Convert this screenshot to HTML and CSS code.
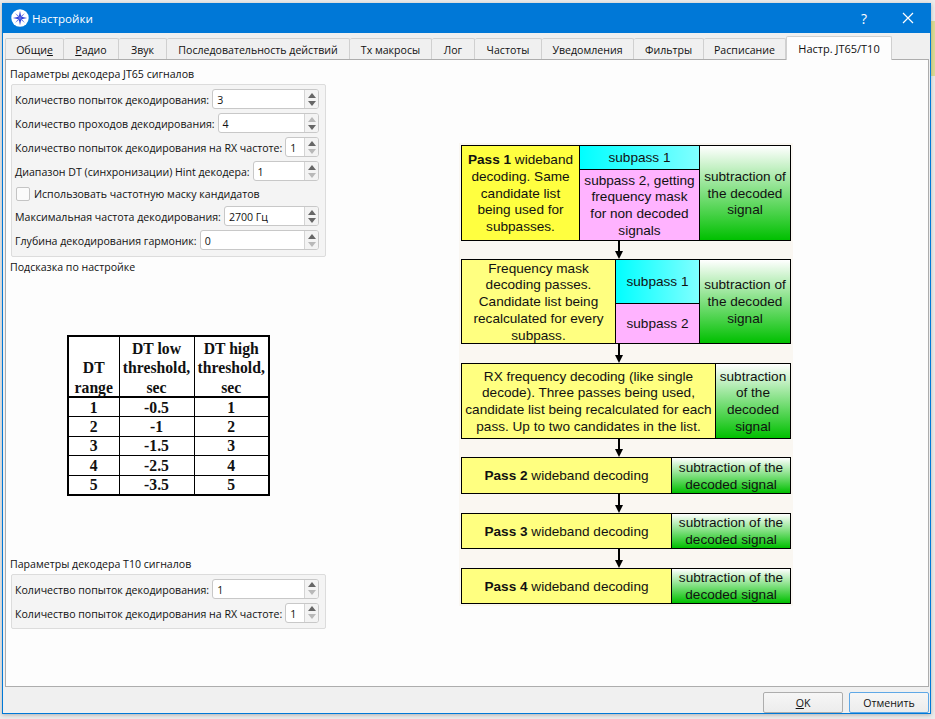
FILE: index.html
```html
<!DOCTYPE html>
<html lang="en">
  <head>
    <meta charset="UTF-8" />
    <meta name="viewport" content="width=device-width, initial-scale=1.0" />
    <title>Настройки</title>
    <link rel="stylesheet" href="styles.css">
  </head>
  <body>
    <div class="behind"></div>
    <div class="window">
      <div class="titlebar">
        <svg class="app-icon" viewBox="0 0 18 18" width="18" height="18">
          <circle cx="9" cy="9" r="8.7" fill="#fff" />
          <path d="M9 1.8 10.2 7.8 16.2 9 10.2 10.2 9 16.2 7.8 10.2 1.8 9 7.8 7.8Z" fill="#2a3bd6" />
          <path d="M4 4 8.6 7.6 9.4 7.6 14 4 10.4 8.6 10.4 9.4 14 14 9.4 10.4 8.6 10.4 4 14 7.6 9.4 7.6 8.6Z" fill="#5b6ae6" />
        </svg>
        <span class="title">Настройки</span>
        <span class="title-btn help">?</span>
        <span class="title-btn close">
          <svg viewBox="0 0 12 12" width="12" height="12"><path d="M1 1 11 11M11 1 1 11" stroke="#fff" stroke-width="1.2" fill="none" /></svg>
        </span>
      </div>

      <div class="tabs">
        <div class="tab">Общи<u>е</u></div>
        <div class="tab"><u>Р</u>адио</div>
        <div class="tab">Звук</div>
        <div class="tab">Последовательность действий</div>
        <div class="tab">Tx макросы</div>
        <div class="tab">Лог</div>
        <div class="tab">Частоты</div>
        <div class="tab">Уведомления</div>
        <div class="tab">Фильтры</div>
        <div class="tab">Расписание</div>
        <div class="tab active">Настр. JT65/T10</div>
      </div>

      <div class="pane">
        <div class="left">
          <div class="caption first">Параметры декодера JT65 сигналов</div>
          <div class="group main">
            <div class="row">
              <span class="label">Количество попыток декодирования:</span>
              <div class="spin"><span class="value">3</span><div class="arrows"><i class="up"></i><i class="down"></i></div></div>
            </div>
            <div class="row">
              <span class="label">Количество проходов декодирования:</span>
              <div class="spin"><span class="value">4</span><div class="arrows"><i class="up off"></i><i class="down"></i></div></div>
            </div>
            <div class="row">
              <span class="label">Количество попыток декодирования на RX частоте:</span>
              <div class="spin"><span class="value">1</span><div class="arrows"><i class="up"></i><i class="down off"></i></div></div>
            </div>
            <div class="row">
              <span class="label">Диапазон DT (синхронизации) Hint декодера:</span>
              <div class="spin"><span class="value">1</span><div class="arrows"><i class="up"></i><i class="down off"></i></div></div>
            </div>
            <div class="row check-row">
              <span class="checkbox"></span>
              <span class="label">Использовать частотную маску кандидатов</span>
            </div>
            <div class="row">
              <span class="label">Максимальная частота декодирования:</span>
              <div class="spin"><span class="value">2700 Гц</span><div class="arrows"><i class="up"></i><i class="down"></i></div></div>
            </div>
            <div class="row">
              <span class="label">Глубина декодирования гармоник:</span>
              <div class="spin"><span class="value">0</span><div class="arrows"><i class="up"></i><i class="down off"></i></div></div>
            </div>
          </div>

          <div class="caption hint">Подсказка по настройке</div>

          <table class="dt-table">
            <tr class="head">
              <th><div>DT<br>range</div></th>
              <th><div>DT low<br>threshold,<br>sec</div></th>
              <th><div>DT high<br>threshold,<br>sec</div></th>
            </tr>
            <tr><td>1</td><td>-0.5</td><td>1</td></tr>
            <tr><td>2</td><td>-1</td><td>2</td></tr>
            <tr><td>3</td><td>-1.5</td><td>3</td></tr>
            <tr><td>4</td><td>-2.5</td><td>4</td></tr>
            <tr><td>5</td><td>-3.5</td><td>5</td></tr>
          </table>

          <div class="caption t10">Параметры декодера T10 сигналов</div>
          <div class="group">
            <div class="row">
              <span class="label">Количество попыток декодирования:</span>
              <div class="spin"><span class="value">1</span><div class="arrows"><i class="up"></i><i class="down off"></i></div></div>
            </div>
            <div class="row">
              <span class="label">Количество попыток декодирования на RX частоте:</span>
              <div class="spin"><span class="value">1</span><div class="arrows"><i class="up"></i><i class="down off"></i></div></div>
            </div>
          </div>
        </div>

        <div class="flow">
          <div class="step step-1">
            <div class="cell yellow strong w-118"><span><b>Pass 1</b> wideband decoding. Same candidate list being used for subpasses.</span></div>
            <div class="split w-120">
              <div class="cell cyan h-24">subpass 1</div>
              <div class="cell pink grow">subpass 2, getting frequency mask for non decoded signals</div>
            </div>
            <div class="cell green grow">subtraction of the decoded signal</div>
          </div>
          <div class="arrow short"></div>
          <div class="step step-2">
            <div class="cell yellow w-154">Frequency mask decoding passes. Candidate list being recalculated for every subpass.</div>
            <div class="split w-84">
              <div class="cell cyan h-44">subpass 1</div>
              <div class="cell pink grow">subpass 2</div>
            </div>
            <div class="cell green grow">subtraction of the decoded signal</div>
          </div>
          <div class="arrow"></div>
          <div class="step step-3">
            <div class="cell yellow w-254"><span>RX frequency decoding (like single<br>decode). Three passes being used,<br>candidate list being recalculated for each<br>pass. Up to two candidates in the list.</span></div>
            <div class="cell green grow">subtraction of the decoded signal</div>
          </div>
          <div class="arrow short"></div>
          <div class="step step-4">
            <div class="cell yellow w-210"><span><b>Pass 2</b> wideband decoding</span></div>
            <div class="cell green grow">subtraction of the decoded signal</div>
          </div>
          <div class="arrow"></div>
          <div class="step step-5">
            <div class="cell yellow w-210"><span><b>Pass 3</b> wideband decoding</span></div>
            <div class="cell green grow">subtraction of the decoded signal</div>
          </div>
          <div class="arrow"></div>
          <div class="step step-5">
            <div class="cell yellow w-210"><span><b>Pass 4</b> wideband decoding</span></div>
            <div class="cell green grow">subtraction of the decoded signal</div>
          </div>
        </div>
      </div>

      <div class="actions">
        <button class="btn"><u>O</u>K</button>
        <button class="btn default">Отменить</button>
      </div>
    </div>
  </body>
</html>
```

FILE: styles.css
```css
* {
  margin: 0;
  padding: 0;
  box-sizing: border-box;
}
body {
  height: 719px;
  overflow: hidden;
  padding: 3px 0 0 2px;
  background-color: #ebebeb;
  font-family: "Open Sans", "Liberation Sans", sans-serif;
  font-size: 10.6px;
  color: #111;
}
.behind {
  position: absolute;
  top: 21px;
  right: 0;
  width: 4px;
  height: 55px;
  background-color: #dcdc96;
}
.window {
  position: relative;
  width: 929px;
  height: 711px;
  display: flex;
  flex-direction: column;
  border: 1px solid #0078d7;
  background-color: #f0f0f0;
  box-shadow: 0 1px 4px #00000040;
}

/* title bar */
.titlebar {
  flex-shrink: 0;
  display: flex;
  align-items: center;
  margin-top: -1px;
  height: 30px;
  padding-left: 8px;
  background-color: #0078d7;
  color: #fff;
}
.app-icon {
  margin-right: 3px;
}
.title {
  font-size: 11.6px;
}
.title-btn {
  width: 44px;
  height: 100%;
  display: flex;
  align-items: center;
  justify-content: center;
}
.help {
  margin-left: auto;
  font-size: 14px;
}

/* tabs */
.tabs {
  height: 26px;
  flex-shrink: 0;
  display: grid;
  grid-template-columns: 59px 55px 48px 183px 82px 43px 67px 92px 70px 82px 106px;
  align-items: end;
  padding: 3px 0 0 2px;
}
.tab {
  height: 21px;
  display: flex;
  align-items: center;
  justify-content: center;
  padding-top: 1px;
  border: 1px solid #d0d0d0;
  border-bottom: none;
  border-left: none;
  border-radius: 2px 2px 0 0;
  background-color: #f0f0f0;
}
.tab:first-child {
  border-left: 1px solid #d0d0d0;
}
.tab.active {
  position: relative;
  height: 24px;
  margin-bottom: -1px;
  padding-top: 0;
  border-left: 1px solid #d0d0d0;
  background-color: #fdfdfd;
  font-size: 11px;
}

/* main page of the dialog */
.pane {
  flex: 1;
  display: flex;
  margin: 0 1px 0 2px;
  border: 1px solid #adadad;
  background-color: #fdfdfd;
}
.left {
  width: 321px;
  padding-left: 4px;
}
.caption {
  height: 16px;
  line-height: 14px;
}
.first {
  margin-top: 7px;
  margin-bottom: 1px;
}
.hint {
  margin-top: 3px;
}
.t10 {
  margin-top: 61px;
  margin-bottom: 1px;
}
.group {
  margin-left: 1px;
  width: 315px;
  display: flex;
  flex-direction: column;
  gap: 4px;
  padding: 4px 6px 5px 3px;
  border: 1px solid #dcdcdc;
  border-radius: 2px;
  background-color: #f4f4f4;
}
.group.main {
  padding-bottom: 6px;
}
.row {
  height: 20px;
  display: flex;
  align-items: center;
  gap: 3px;
}
.label {
  padding-top: 2px;
  white-space: nowrap;
}
.check-row {
  height: 17px;
  gap: 4px;
  padding-left: 1px;
}
.check-row .label {
  padding-top: 0;
}
.checkbox {
  width: 14px;
  height: 14px;
  border: 1px solid #c4c4c4;
  border-radius: 2px;
  background-color: #fbfbfb;
}
.spin {
  flex: 1;
  height: 20px;
  display: flex;
  align-items: center;
  border: 1px solid #c8c8c8;
  border-radius: 3px;
  background-color: #fff;
}
.value {
  flex: 1;
  padding: 2px 0 0 4px;
}
.arrows {
  width: 14px;
  height: 100%;
  display: flex;
  flex-direction: column;
  align-items: center;
  justify-content: center;
  gap: 3px;
  border-left: 1px solid #d4d4d4;
  background-color: #f3f3f3;
  border-radius: 0 2px 2px 0;
}
.up,
.down {
  width: 0;
  height: 0;
  border-left: 4px solid transparent;
  border-right: 4px solid transparent;
}
.up {
  border-bottom: 5px solid #666;
}
.down {
  border-top: 5px solid #666;
}
.up.off {
  border-bottom-color: #b8b8b8;
}
.down.off {
  border-top-color: #b8b8b8;
}

/* DT table */
.dt-table {
  margin: 59px 0 0 57px;
  width: 203px;
  border-collapse: collapse;
  border: 2px solid #000;
  background-color: #fff;
  font-family: "Liberation Serif", serif;
  font-size: 15.7px;
  font-weight: 700;
  color: #111;
  text-align: center;
}
.dt-table th,
.dt-table td {
  border: 1px solid #000;
  padding: 0;
}
.dt-table th {
  height: 61px;
  vertical-align: bottom;
  line-height: 19.5px;
  border-bottom: 2px solid #000;
}
.dt-table th div {
  margin-bottom: -1px;
}
.dt-table td {
  height: 19.5px;
  line-height: 17px;
}
.dt-table th:nth-child(1) {
  width: 51px;
}
.dt-table th:nth-child(2) {
  width: 75px;
}

/* flow chart */
.flow {
  width: 334px;
  height: 463px;
  margin: 83px 0 0 132px;
  padding: 2px;
  display: flex;
  flex-direction: column;
  background-color: #faf7f2;
  font-family: "Liberation Sans", sans-serif;
  font-size: 13.6px;
  line-height: 16.7px;
  color: #111;
}
.step {
  width: 330px;
  display: flex;
  flex-shrink: 0;
  border: 1px solid #000;
}
.step-1 {
  height: 96px;
}
.step-2 {
  height: 85px;
}
.step-3 {
  height: 76px;
}
.step-4 {
  height: 37px;
}
.step-5 {
  height: 36px;
}
.arrow {
  position: relative;
  height: 19px;
  flex-shrink: 0;
}
.arrow.short {
  height: 18px;
}
.arrow::before {
  content: "";
  position: absolute;
  left: 157px;
  top: 0;
  bottom: 4px;
  width: 2px;
  background-color: #000;
}
.arrow::after {
  content: "";
  position: absolute;
  left: 154px;
  bottom: 0;
  width: 0;
  height: 0;
  border-left: 4px solid transparent;
  border-right: 4px solid transparent;
  border-top: 8px solid #000;
}
.cell {
  display: flex;
  align-items: center;
  justify-content: center;
  text-align: center;
  padding: 2px 2px 0;
}
.split {
  display: flex;
  flex-direction: column;
  border-right: 1px solid #000;
  flex-shrink: 0;
}
.yellow {
  background-color: #ffff80;
  border-right: 1px solid #000;
  flex-shrink: 0;
}
.strong {
  background-color: #ffff40;
}
.cyan {
  background: linear-gradient(to right, #00ffff, #80ffff);
  border-bottom: 1px solid #000;
}
.pink {
  background-color: #ffb3ff;
}
.green {
  background: linear-gradient(to bottom, #ffffff, #00c000);
}
.grow {
  flex: 1;
}
.w-118 {
  width: 118px;
}
.w-120 {
  width: 120px;
}
.w-154 {
  width: 154px;
}
.w-84 {
  width: 84px;
}
.w-254 {
  width: 254px;
}
.w-210 {
  width: 210px;
}
.h-24 {
  height: 24px;
}
.h-44 {
  height: 44px;
}

/* bottom buttons */
.actions {
  height: 26px;
  flex-shrink: 0;
  display: flex;
  justify-content: flex-end;
  gap: 6px;
  padding: 5px 1px 0 0;
}
.btn {
  width: 80px;
  height: 21px;
  border: 1px solid #adadad;
  border-radius: 2px;
  background: linear-gradient(to bottom, #f6f6f6, #ececec);
  font-family: inherit;
  font-size: 10.6px;
  color: #111;
}
.btn.default {
  border-color: #5fa8e6;
}
```
